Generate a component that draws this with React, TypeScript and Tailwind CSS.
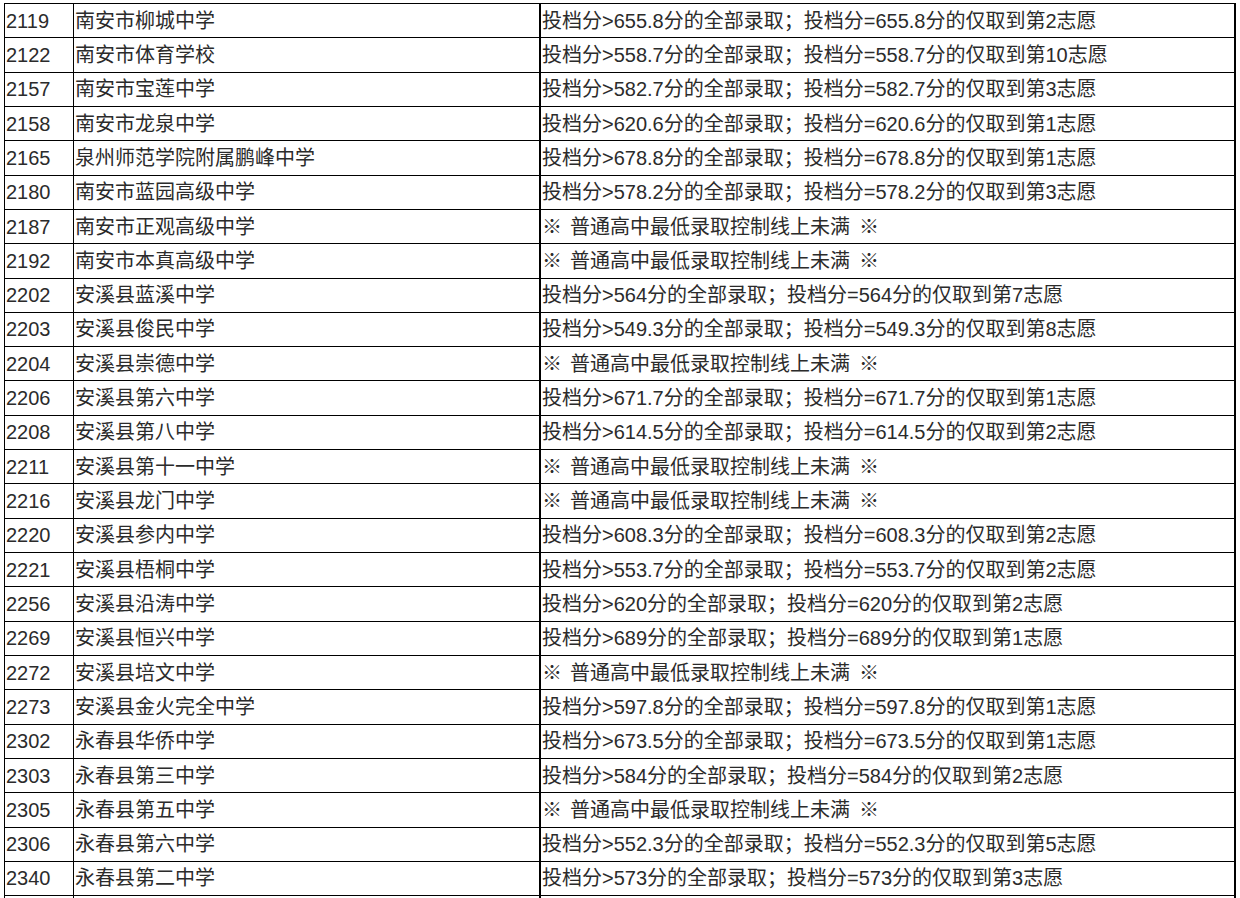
const NONE = "none";

type Row = { code: string; name: string; score?: string; choice?: string };

const rows: Row[] = [
  { code: "2119", name: "南安市柳城中学", score: "655.8", choice: "2" },
  { code: "2122", name: "南安市体育学校", score: "558.7", choice: "10" },
  { code: "2157", name: "南安市宝莲中学", score: "582.7", choice: "3" },
  { code: "2158", name: "南安市龙泉中学", score: "620.6", choice: "1" },
  { code: "2165", name: "泉州师范学院附属鹏峰中学", score: "678.8", choice: "1" },
  { code: "2180", name: "南安市蓝园高级中学", score: "578.2", choice: "3" },
  { code: "2187", name: "南安市正观高级中学" },
  { code: "2192", name: "南安市本真高级中学" },
  { code: "2202", name: "安溪县蓝溪中学", score: "564", choice: "7" },
  { code: "2203", name: "安溪县俊民中学", score: "549.3", choice: "8" },
  { code: "2204", name: "安溪县崇德中学" },
  { code: "2206", name: "安溪县第六中学", score: "671.7", choice: "1" },
  { code: "2208", name: "安溪县第八中学", score: "614.5", choice: "2" },
  { code: "2211", name: "安溪县第十一中学" },
  { code: "2216", name: "安溪县龙门中学" },
  { code: "2220", name: "安溪县参内中学", score: "608.3", choice: "2" },
  { code: "2221", name: "安溪县梧桐中学", score: "553.7", choice: "2" },
  { code: "2256", name: "安溪县沿涛中学", score: "620", choice: "2" },
  { code: "2269", name: "安溪县恒兴中学", score: "689", choice: "1" },
  { code: "2272", name: "安溪县培文中学" },
  { code: "2273", name: "安溪县金火完全中学", score: "597.8", choice: "1" },
  { code: "2302", name: "永春县华侨中学", score: "673.5", choice: "1" },
  { code: "2303", name: "永春县第三中学", score: "584", choice: "2" },
  { code: "2305", name: "永春县第五中学" },
  { code: "2306", name: "永春县第六中学", score: "552.3", choice: "5" },
  { code: "2340", name: "永春县第二中学", score: "573", choice: "3" },
  { code: "", name: "" },
];

function Describe({ row }: { row: Row }) {
  if (!row.code) return null;
  if (!row.score)
    return (
      <>
        <span>※</span>
        <span className="ml-[8px]">普通高中最低录取控制线上未满</span>
        <span className="ml-[9px]">※</span>
      </>
    );
  return (
    <>{`投档分>${row.score}分的全部录取；投档分=${row.score}分的仅取到第${row.choice}志愿`}</>
  );
}

export default function App() {
  return (
    <div className="h-[898px] w-[1240px] overflow-hidden bg-white pl-[4px] pt-[3px]">
      <div className="w-[1232px] border-l border-t border-black text-[20px] text-[#2b2b2b] [font-family:'Liberation_Sans','Noto_Sans_CJK_SC',sans-serif]">
        {rows.map((row, i) => (
          <div key={row.code || NONE + i} className="flex h-[34.32px] border-b border-black">
            <div className="flex w-[69px] shrink-0 items-center border-r border-black pl-px leading-none">
              {row.code}
            </div>
            <div className="flex w-[467px] shrink-0 items-center border-r-2 border-black pl-px leading-none">
              {row.name}
            </div>
            <div className="flex flex-1 items-center border-r-2 border-black pl-px leading-none whitespace-pre">
              <Describe row={row} />
            </div>
          </div>
        ))}
      </div>
    </div>
  );
}
